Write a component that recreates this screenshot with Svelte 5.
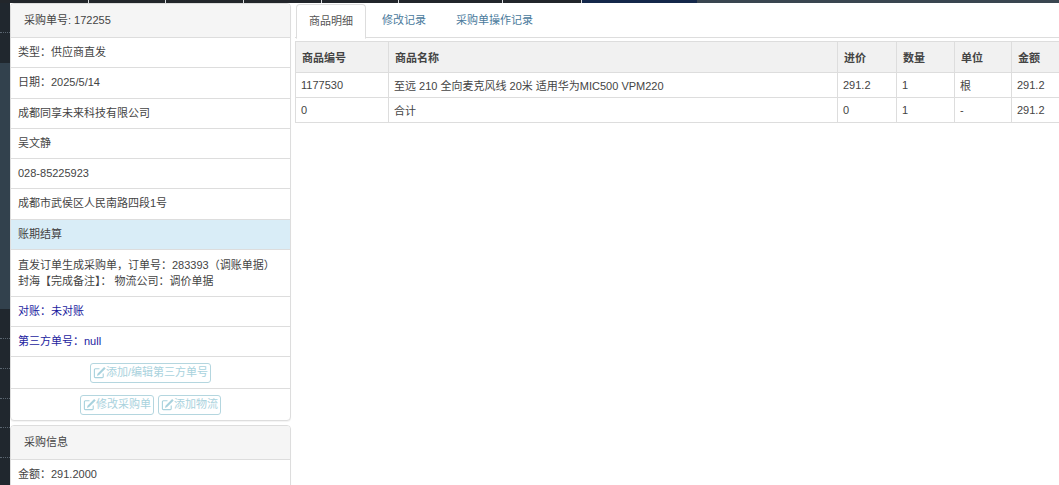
<script lang="ts">
  const topTicks = [88, 165, 243, 321, 398, 502, 581];
  const sideDots = [29, 335, 365, 395, 424, 454];

  const rows = [
    { no: '1177530', name: '至远 210 全向麦克风线 20米 适用华为MIC500 VPM220', price: '291.2', qty: '1', unit: '根', total: '291.2' },
    { no: '0', name: '合计', price: '0', qty: '1', unit: '-', total: '291.2' },
  ];
</script>

{#snippet editIcon()}
  <svg class="edit-icon" viewBox="0 0 14 14" aria-hidden="true">
    <path d="M11 8v3.5a1 1 0 0 1-1 1H2.5a1 1 0 0 1-1-1V4a1 1 0 0 1 1-1H7" />
    <path d="M5.5 8.5 12 2l.8.8-6.5 6.5-1.2.4z" />
  </svg>
{/snippet}

<div class="page">
  <div class="topbar">
    <span class="seg seg-dark"></span>
    <span class="seg seg-navy"></span>
    <span class="seg seg-slate"></span>
    {#each topTicks as x}<i class="tick" style="left:{x}px"></i>{/each}
  </div>

  <div class="content">
    <aside class="rail">
      {#each sideDots as y}<i class="dot" style="top:{y}px"></i>{/each}
    </aside>

    <div class="left">
      <section class="panel">
        <div class="panel-head">采购单号: 172255</div>
        <div class="item">类型：供应商直发</div>
        <div class="item">日期：2025/5/14</div>
        <div class="item">成都同享未来科技有限公司</div>
        <div class="item">吴文静</div>
        <div class="item">028-85225923</div>
        <div class="item">成都市武侯区人民南路四段1号</div>
        <div class="item info">账期结算</div>
        <div class="item note">直发订单生成采购单，订单号：283393（调账单据）<br />封海【完成备注】： 物流公司：调价单据</div>
        <div class="item blue">对账：未对账</div>
        <div class="item blue">第三方单号：null</div>
        <div class="item actions"><span class="btn">{@render editIcon()}添加/编辑第三方单号</span></div>
        <div class="item actions">
          <span class="btn">{@render editIcon()}修改采购单</span>
          <span class="btn">{@render editIcon()}添加物流</span>
        </div>
      </section>

      <section class="panel">
        <div class="panel-head">采购信息</div>
        <div class="item">金额：291.2000</div>
      </section>
    </div>

    <main class="right">
      <nav class="tabs">
        <span class="tab active">商品明细</span>
        <span class="tab">修改记录</span>
        <span class="tab">采购单操作记录</span>
      </nav>

      <table>
        <colgroup>
          <col class="c-no" />
          <col class="c-name" />
          <col class="c-price" />
          <col class="c-qty" />
          <col class="c-unit" />
          <col class="c-total" />
        </colgroup>
        <thead>
          <tr>
            <th>商品编号</th>
            <th>商品名称</th>
            <th>进价</th>
            <th>数量</th>
            <th>单位</th>
            <th>金额</th>
          </tr>
        </thead>
        <tbody>
          {#each rows as row}
            <tr>
              <td>{row.no}</td>
              <td>{row.name}</td>
              <td>{row.price}</td>
              <td>{row.qty}</td>
              <td>{row.unit}</td>
              <td>{row.total}</td>
            </tr>
          {/each}
        </tbody>
      </table>
    </main>
  </div>
</div>

<style>
  :global(body) {
    margin: 0;
    background: #fff;
    overflow: hidden;
  }

  .page {
    height: 485px;
    overflow: hidden;
    font-family: "Liberation Sans", "Noto Sans CJK SC", sans-serif;
    font-size: 11px;
    color: #444;
  }

  .topbar {
    position: relative;
    display: flex;
    height: 3px;
  }

  .seg-dark {
    width: 581px;
    background: #22262b;
  }

  .seg-navy {
    width: 116px;
    background: #14284a;
  }

  .seg-slate {
    flex: 1;
    background: #3a4650;
  }

  .tick {
    position: absolute;
    top: 0;
    width: 1px;
    height: 3px;
    background: #d8dbde;
  }

  .content {
    display: flex;
    align-items: flex-start;
  }

  .rail {
    position: relative;
    flex: none;
    width: 10px;
    height: 482px;
    background: linear-gradient(#20272e 0, #20272e 60px, #32414d 60px, #32414d 306px, #20272e 306px);
  }

  .dot {
    position: absolute;
    left: 0;
    width: 10px;
    border-top: 1px dotted #5a6570;
  }

  .left {
    flex: none;
    width: 281px;
  }

  .panel {
    background: #fff;
    border: 1px solid #ddd;
    border-radius: 4px;
    box-shadow: 0 1px 1px rgba(0, 0, 0, 0.05);
    overflow: hidden;
    margin: 0 0 4px;
  }

  .panel-head {
    height: 33px;
    padding-left: 13px;
    line-height: 33px;
    background: #f5f5f5;
    border-bottom: 1px solid #ddd;
  }

  .item {
    min-height: 29.3px;
    padding: 0 7px;
    line-height: 29.3px;
    border-bottom: 1px solid #ddd;
  }

  .item:last-child {
    border-bottom: 0;
  }

  .info {
    background: #d9edf7;
  }

  .note {
    padding: 7px 7px 6.5px;
    line-height: 16px;
  }

  .blue {
    color: #1c1ca0;
  }

  .actions {
    display: flex;
    justify-content: center;
    gap: 4px;
    height: 31px;
    align-items: center;
  }

  .btn {
    display: inline-flex;
    align-items: center;
    height: 18px;
    padding: 0 2px;
    color: #a9d2dd;
    border: 1px solid #b4d6df;
    border-radius: 3px;
  }

  .edit-icon {
    width: 13px;
    height: 13px;
    fill: none;
    stroke: currentColor;
    stroke-width: 1.2;
  }

  .right {
    flex: 1;
    min-width: 0;
    padding: 1px 0 0 4px;
  }

  .tabs {
    display: flex;
    height: 33px;
    border-bottom: 1px solid #ddd;
  }

  .tab {
    margin-left: 2px;
    padding: 0 14px;
    line-height: 33px;
    color: #4a7a9c;
  }

  .active {
    margin-left: 1px;
    margin-bottom: -1px;
    padding: 0 12px;
    height: 33px;
    background: #fff;
    color: #555;
    border: 1px solid #ddd;
    border-bottom-color: #fff;
    border-radius: 4px 4px 0 0;
  }

  table {
    width: 765px;
    margin-top: 3px;
    table-layout: fixed;
    border-collapse: collapse;
    border: 1px solid #ddd;
  }

  .c-no { width: 93px; }
  .c-name { width: 449px; }
  .c-price { width: 59px; }
  .c-qty { width: 58px; }
  .c-unit { width: 57px; }
  .c-total { width: 49px; }

  th,
  td {
    padding: 0 5px;
    text-align: left;
    border: 1px solid #ddd;
    white-space: nowrap;
  }

  th {
    height: 30px;
    padding-left: 6px;
    background: #f1f1f1;
    font-weight: bold;
  }

  td {
    height: 24px;
  }
</style>
